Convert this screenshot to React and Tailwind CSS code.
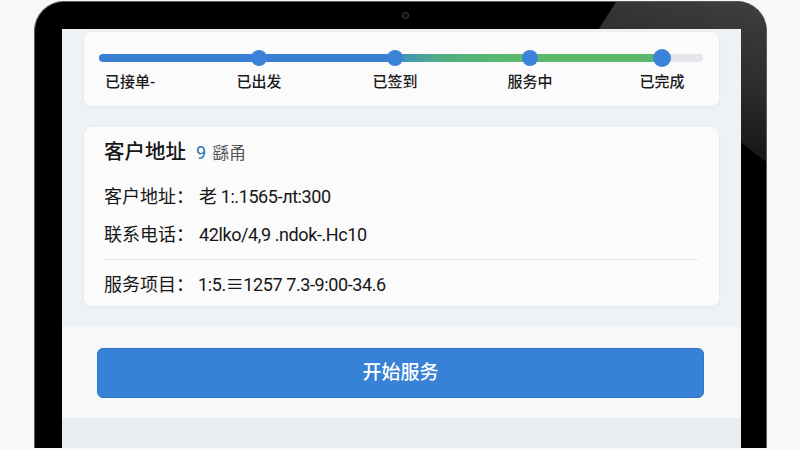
import React from "react";

const font = { fontFamily: '"Roboto", "Noto Sans CJK SC", sans-serif' };

export default function App() {
  return (
    <div
      className="w-[800px] h-[450px] bg-[#f8f8f8] overflow-hidden pt-px"
      style={font}
    >
      <div className="relative ml-[34px] w-[733px] h-[447px] bg-black rounded-t-[30px] border border-b-0 border-[#5a5a5a] pt-[27px] pl-[27px] pr-[25px]">
        {/* reflection on bezel */}
        <div className="absolute top-0 right-0 w-[168px] h-[160px] rounded-tr-[29px] bg-[linear-gradient(195deg,#3f3f3f_0%,#2e2e2e_40%,#151515_80%,#000_100%)] [clip-path:polygon(18px_0,100%_0,100%_100%,0_28px)]" />
        {/* webcam */}
        <div className="absolute top-[10px] left-[367px] w-[7px] h-[7px] rounded-full border border-[#3c4654] bg-[#0b0d10]" />

        <div className="relative h-full bg-[#eef1f5] flex flex-col">
          {/* progress card */}
          <div className="mx-[22px] mt-[3px] h-[74px] rounded-[8px] bg-[#fbfbfc] shadow-[0_1px_4px_rgba(0,0,0,0.06)] pl-[15px] pr-[16px] pt-[22px]">
            <div className="relative h-[8px] flex rounded-full bg-[#e4e6e9]">
              <div className="w-[296px] h-full rounded-l-full bg-[#3a7fd4]" />
              <div className="w-[267px] h-full bg-[linear-gradient(90deg,#3f8ec6_0px,#52ad82_45px,#5cb96b_120px,#5cb96b_100%)]" />
              <div className="absolute top-1/2 -translate-y-1/2 left-[152px] w-[16px] h-[16px] rounded-full bg-[#3b82d9]" />
              <div className="absolute top-1/2 -translate-y-1/2 left-[288px] w-[16px] h-[16px] rounded-full bg-[#3b82d9]" />
              <div className="absolute top-1/2 -translate-y-1/2 left-[423px] w-[16px] h-[16px] rounded-full bg-[#3b82d9]" />
              <div className="absolute top-1/2 -translate-y-1/2 left-[554px] w-[18px] h-[18px] rounded-full bg-[#3b82d9]" />
            </div>
            <div className="flex mt-[10px] text-[15px] leading-[20px] text-[#1a1a1a] font-medium">
              <div className="w-[130px] pl-[6px]">已接单-</div>
              <div className="w-[60px] text-center">已出发</div>
              <div className="w-[60px] ml-[76px] text-center">已签到</div>
              <div className="w-[60px] ml-[75px] text-center">服务中</div>
              <div className="w-[60px] ml-[72px] text-center">已完成</div>
            </div>
          </div>

          {/* info card */}
          <div className="mx-[22px] mt-[21px] h-[179px] rounded-[8px] bg-[#fbfbfc] shadow-[0_1px_4px_rgba(0,0,0,0.06)] pl-[20px] pr-[21px] pt-[11px] text-[#161616]">
            <div className="flex items-baseline leading-[28px]">
              <span className="text-[20.5px] font-medium">客户地址</span>
              <span className="ml-[10px] text-[18px] text-[#2f6fb6]">9</span>
              <span className="ml-[6px] text-[17px] text-[#555]">繇甬</span>
            </div>
            <div className="mt-[17px] flex text-[18px] leading-[26px]">
              <span>客户地址：</span>
              <span className="ml-[5px] tracking-[-0.4px]">老 1:.1565-лt:300</span>
            </div>
            <div className="mt-[12px] flex text-[18px] leading-[26px]">
              <span>联系电话：</span>
              <span className="ml-[5px] tracking-[-0.4px]">42lko/4,9 .ndok-.Hc10</span>
            </div>
            <div className="mt-[11px] h-px bg-[#e5e7ea]" />
            <div className="mt-[12px] flex text-[18px] leading-[26px]">
              <span>服务项目：</span>
              <span className="ml-[4px] tracking-[-0.4px]">1:5.≡1257 7.3-9:00-34.6</span>
            </div>
          </div>

          {/* footer with button */}
          <div className="mt-[21px] h-[91px] bg-[#f7f8fa] pl-[35px] pr-[37px] pt-[21px]">
            <div className="h-[50px] rounded-[6px] bg-[#3781d6] border border-[#2f74c6] flex items-center justify-center text-white text-[19px] font-medium">
              开始服务
            </div>
          </div>
          <div className="flex-1 bg-[#e9edf2]" />
        </div>
      </div>
    </div>
  );
}
